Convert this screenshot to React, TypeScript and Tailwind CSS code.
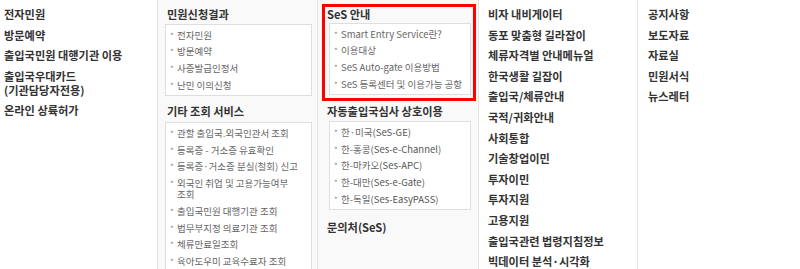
const quick = ["전자민원", "방문예약", "출입국민원 대행기관 이용", "출입국우대카드\n(기관담당자전용)", "온라인 상륙허가"];

const results = ["전자민원", "방문예약", "사증발급인정서", "난민 이의신청"];

const etc = [
  "관할 출입국.외국인관서 조회",
  "등록증 - 거소증 유효확인",
  "등록증·거소증 분실(철회) 신고",
  "외국인 취업 및 고용가능여부\n조회",
  "출입국민원 대행기관 조회",
  "법무부지정 의료기관 조회",
  "체류만료일조회",
  "육아도우미 교육수료자 조회",
];

const sesGuide = ["Smart Entry Service란?", "이용대상", "SeS Auto-gate 이용방법", "SeS 등록센터 및 이용가능 공항"];

const sesMutual = [
  ["한·미국", "(SeS-GE)"],
  ["한-홍콩", "(Ses-e-Channel)"],
  ["한-마카오", "(Ses-APC)"],
  ["한-대만", "(Ses-e-Gate)"],
  ["한-독일", "(Ses-EasyPASS)"],
];

const guides = [
  "비자 내비게이터",
  "동포 맞춤형 길라잡이",
  "체류자격별 안내메뉴얼",
  "한국생활 길잡이",
  "출입국/체류안내",
  "국적/귀화안내",
  "사회통합",
  "기술창업이민",
  "투자이민",
  "투자지원",
  "고용지원",
  "출입국관련 법령지침정보",
  "빅데이터 분석·시각화",
];

const news = ["공지사항", "보도자료", "자료실", "민원서식", "뉴스레터"];

function LinkList({ items }: { items: string[] }) {
  return (
    <ul className="flex flex-col gap-[6.6px]">
      {items.map((t) => (
        <li key={t} className="text-[11.2px] leading-[14px] font-bold text-[#333] whitespace-pre-line">
          {t}
        </li>
      ))}
    </ul>
  );
}

function Heading({ children, className = "" }: { children: React.ReactNode; className?: string }) {
  return <h3 className={"text-[11.2px] leading-[14px] font-bold text-[#333] " + className}>{children}</h3>;
}

function SubBox({ children }: { children: React.ReactNode }) {
  return (
    <ul className="flex flex-col gap-[5.75px] border border-[#dedede] bg-white px-[4px] py-[4.5px]">{children}</ul>
  );
}

function SubItem({ children }: { children: React.ReactNode }) {
  return (
    <li className="flex text-[9.5px] leading-[11px] text-[#666]">
      <span className="w-[7px] shrink-0 text-[8px] text-[#888]">*</span>
      <span className="whitespace-pre-line">{children}</span>
    </li>
  );
}

export default function App() {
  return (
    <div className="flex h-[269px] w-[800px] overflow-hidden bg-white font-['Noto_Sans_CJK_KR','Noto_Sans',sans-serif]">
      {/* quick links */}
      <div className="w-[157px] shrink-0 pl-[4px] pt-[7px]">
        <LinkList items={quick} />
      </div>

      {/* 민원신청결과 / 기타 조회 */}
      <div className="w-[160px] shrink-0 border-l border-[#e3e3e3] bg-[#f9f9f9] pl-[7px] pr-[5px] pt-[7px]">
        <Heading className="mb-[3px] pl-[2px]">민원신청결과</Heading>
        <SubBox>
          {results.map((t) => (
            <SubItem key={t}>{t}</SubItem>
          ))}
        </SubBox>
        <Heading className="mb-[4px] mt-[8px] pl-[2px]">기타 조회 서비스</Heading>
        <SubBox>
          {etc.map((t) => (
            <SubItem key={t}>{t}</SubItem>
          ))}
        </SubBox>
      </div>

      {/* SeS */}
      <div className="w-[161px] shrink-0 border-l border-[#e3e3e3] bg-[#f9f9f9] pl-[11px] pr-[7px] pt-[7px]">
        <section className="relative">
          <Heading className="mb-[2px] -ml-[2px]">SeS 안내</Heading>
          <SubBox>
            {sesGuide.map((t) => (
              <SubItem key={t}>{t}</SubItem>
            ))}
          </SubBox>
          <div className="pointer-events-none absolute -bottom-[6px] -left-[7px] -right-[5px] -top-[3px] border-[3px] border-[#ff0000]" />
        </section>
        <Heading className="mb-[3px] mt-[9px] -ml-[2px]">자동출입국심사 상호이용</Heading>
        <SubBox>
          {sesMutual.map(([ko, en]) => (
            <SubItem key={en}>
              {ko}
              <span className="text-[#555]">{en}</span>
            </SubItem>
          ))}
        </SubBox>
        <Heading className="mt-[10px] -ml-[2px]">문의처(SeS)</Heading>
      </div>

      {/* guides */}
      <div className="w-[159px] shrink-0 border-l border-[#e3e3e3] pl-[9px] pt-[7px]">
        <LinkList items={guides} />
      </div>

      {/* news */}
      <div className="flex-1 border-l border-[#e3e3e3] pl-[10px] pt-[7px]">
        <LinkList items={news} />
      </div>
    </div>
  );
}
